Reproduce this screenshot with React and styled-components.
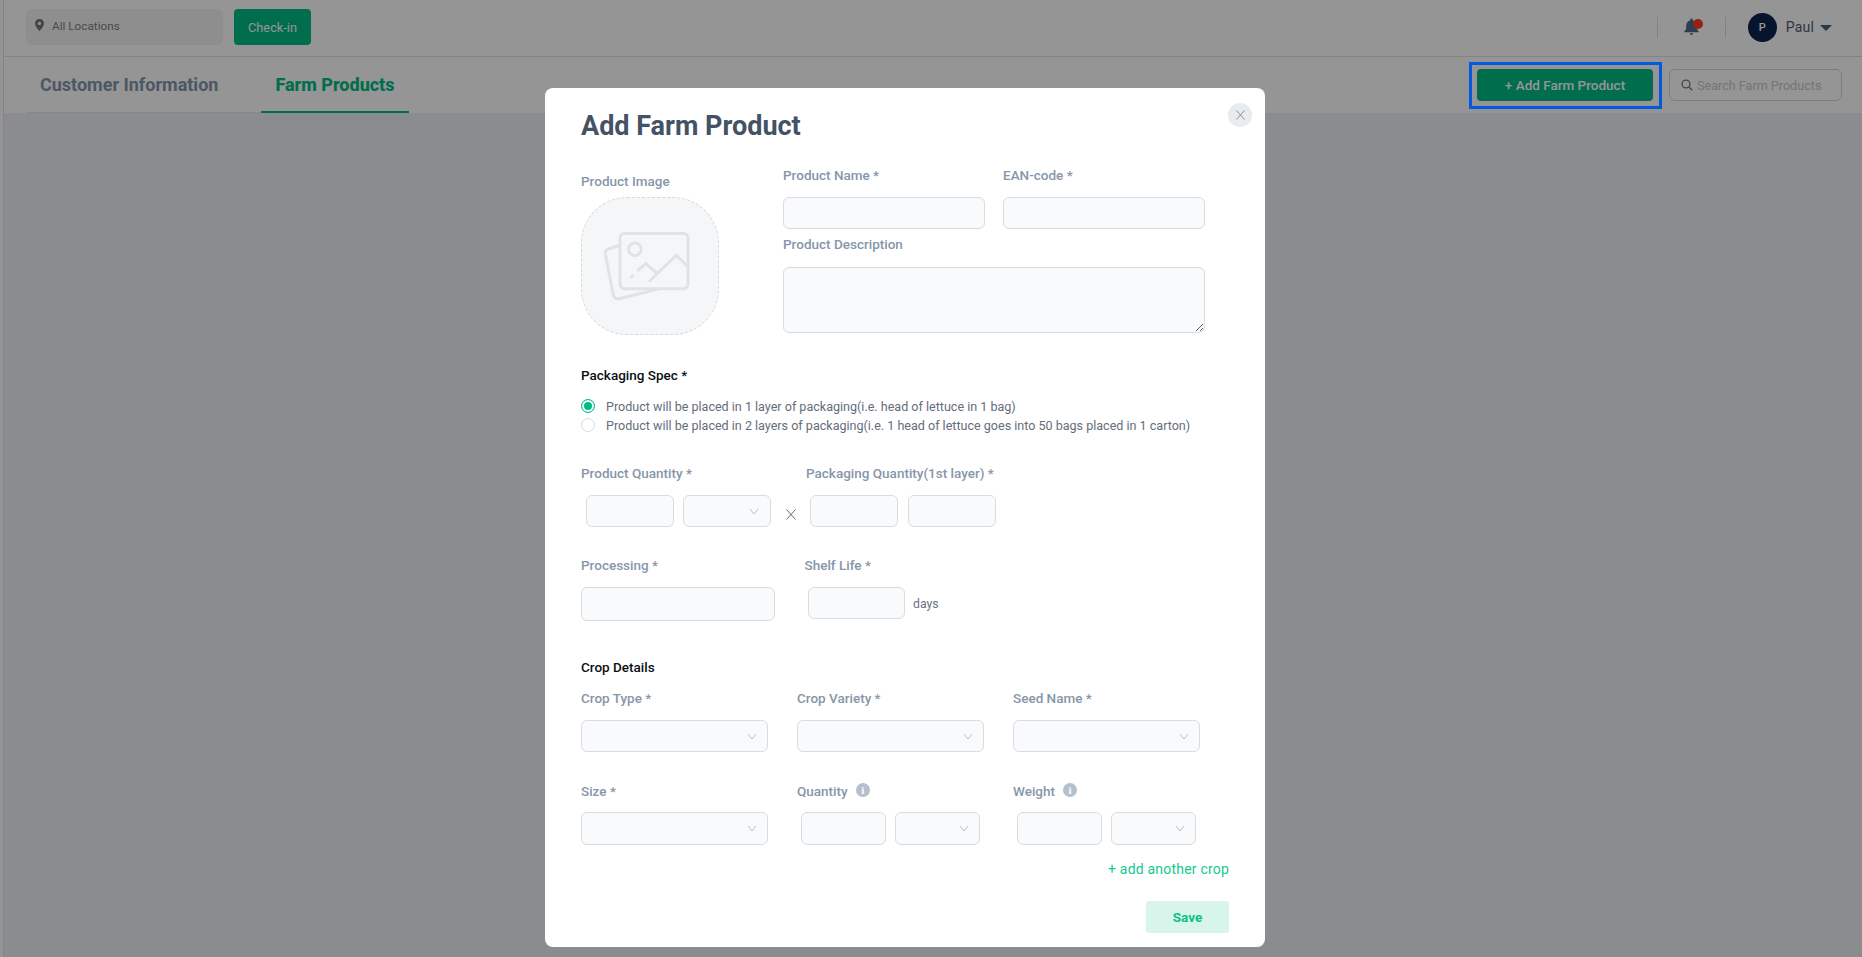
import React from "react";
import styled, { createGlobalStyle } from "styled-components";

const GlobalStyle = createGlobalStyle`
  html, body {
    margin: 0;
    padding: 0;
    height: 100%;
    font-family: Roboto, "Liberation Sans", sans-serif;
    background: #edf0f5;
  }
  * {
    box-sizing: border-box;
  }
`;

const GREEN = "#00bb84";

const Page = styled.div`
  display: flex;
  height: 957px;
  overflow: hidden;
`;

const LeftRail = styled.div`
  width: 4px;
  background: #fff;
  border-right: 1px solid #dfe1e4;
`;

const Main = styled.div`
  flex: 1;
  display: flex;
  flex-direction: column;
`;

const TopBar = styled.div`
  height: 57px;
  flex: none;
  display: flex;
  align-items: flex-start;
  padding: 9px 30px 0 22px;
  background: #fff;
  border-bottom: 1px solid #dfe1e4;
`;

const LocationBox = styled.div`
  width: 197px;
  height: 36px;
  display: flex;
  align-items: flex-start;
  gap: 8px;
  padding: 10px 0 0 9px;
  background: #f4f4f4;
  border-radius: 6px;
  color: #7d7d7d;
  font-size: 11.75px;
  line-height: 14px;
`;

const CheckInButton = styled.button`
  width: 77px;
  height: 36px;
  margin-left: 11px;
  border: 0;
  border-radius: 4px;
  background: ${GREEN};
  color: #fff;
  font: 400 12.75px Roboto, sans-serif;
`;

const BarRight = styled.div`
  margin-left: auto;
  display: flex;
  align-items: center;
  height: 36px;
`;

const BarDivider = styled.div`
  width: 1px;
  height: 21px;
  background: #dcdee1;
`;

const BellSlot = styled.div`
  position: relative;
  width: 67px;
  display: flex;
  justify-content: center;
`;

const BellDot = styled.span`
  position: absolute;
  top: 1px;
  left: 35px;
  width: 10px;
  height: 10px;
  border-radius: 50%;
  background: #ff3b24;
`;

const Avatar = styled.div`
  width: 29px;
  height: 29px;
  margin-left: 22px;
  border-radius: 50%;
  background: #0c2350;
  color: #fff;
  display: flex;
  align-items: center;
  justify-content: center;
  font-size: 11px;
  font-weight: 500;
`;

const UserName = styled.span`
  margin-left: 9px;
  color: #4b5e75;
  font-size: 14px;
  letter-spacing: 0.2px;
`;

const Caret = styled.span`
  width: 0;
  height: 0;
  margin: 2px 0 0 6px;
  border-left: 6px solid transparent;
  border-right: 6px solid transparent;
  border-top: 6px solid #4b5e75;
`;

const TabRow = styled.div`
  height: 56px;
  flex: none;
  display: flex;
  align-items: flex-start;
  padding: 0 20px 0 22px;
  background: #fff;
`;

const TabList = styled.div`
  display: flex;
  gap: 29px;
  height: 56px;
  border-bottom: 1px solid #e4e6e9;
`;

const Tab = styled.div`
  height: 56px;
  padding: 0 14px;
  display: flex;
  align-items: center;
  font-size: 18px;
  font-weight: ${(p) => (p.$active ? 800 : 700)};
  color: ${(p) => (p.$active ? GREEN : "#8396ae")};
  border-bottom: 2px solid ${(p) => (p.$active ? GREEN : "transparent")};
`;

const TabActions = styled.div`
  margin-left: auto;
  display: flex;
  gap: 16px;
  padding-top: 12px;
`;

const AddButton = styled.button`
  width: 176px;
  height: 32px;
  border: 0;
  border-radius: 4px;
  background: ${GREEN};
  color: #fff;
  font: 500 13.5px Roboto, sans-serif;
`;

const SearchBox = styled.div`
  width: 173px;
  height: 32px;
  display: flex;
  align-items: center;
  gap: 4px;
  padding-left: 11px;
  border: 1px solid #d5d5d5;
  border-radius: 6px;
  color: #c6c8ca;
  font-size: 12.6px;
  svg {
    color: #777;
  }
`;

const PageBody = styled.div`
  flex: 1;
  background: #edf0f5;
`;

const Overlay = styled.div`
  position: fixed;
  inset: 0;
  display: flex;
  align-items: flex-start;
  padding: 88px 0 0 545px;
  background: rgba(0, 0, 0, 0.415);
`;

const FocusFrame = styled.div`
  position: absolute;
  top: 62px;
  left: 1469px;
  width: 193px;
  height: 47px;
  border: 3px solid #0558e0;
`;

const Modal = styled.div`
  position: relative;
  width: 720px;
  height: 859px;
  padding: 21px 36px 0 36px;
  background: #fff;
  border-radius: 8px;
`;

const CloseButton = styled.button`
  position: absolute;
  top: 15px;
  right: 13px;
  width: 24px;
  height: 24px;
  padding: 0;
  border: 0;
  border-radius: 50%;
  background: #e8ecef;
  color: #7b8794;
  display: flex;
  align-items: center;
  justify-content: center;
`;

const Title = styled.h1`
  margin: 0 0 22px;
  height: 34px;
  font-size: 27px;
  line-height: 34px;
  font-weight: 700;
  color: #435265;
`;

const TopSection = styled.div`
  display: flex;
  gap: 64px;
`;

const ImageColumn = styled.div`
  width: 138px;
  padding-top: 6px;
`;

const Label = styled.div`
  height: 20px;
  margin: ${(p) => p.$mt || 0}px 0 ${(p) => (p.$mb === undefined ? 12 : p.$mb)}px;
  display: flex;
  align-items: center;
  gap: 8px;
  font-size: 13.5px;
  line-height: 20px;
  font-weight: 500;
  color: #8796a9;
  white-space: nowrap;
`;

const SectionTitle = styled(Label)`
  color: #0b0f14;
`;

const ImageDrop = styled.div`
  width: 138px;
  height: 138px;
  display: flex;
  align-items: center;
  justify-content: center;
  background: #f4f6f7;
  border: 1px dashed #d6dadd;
  border-radius: 46px;
`;

const FieldsColumn = styled.div`
  width: 422px;
`;

const NameGrid = styled.div`
  display: grid;
  grid-template-columns: 202px 202px;
  column-gap: 18px;
`;

const TextField = styled.input`
  display: block;
  width: ${(p) => p.$w || "100%"};
  height: ${(p) => p.$h || 32}px;
  margin: 0;
  padding: 0 8px;
  background: #f9fafb;
  border: 1px solid #d9dce0;
  border-radius: 6px;
  outline: none;
`;

const TextArea = styled.textarea`
  display: block;
  width: 422px;
  height: 66px;
  margin: 0;
  background: #f9fafb;
  border: 1px solid #d9dce0;
  border-radius: 6px;
  outline: none;
`;

const SelectBox = styled.div`
  width: ${(p) => p.$w || "100%"};
  height: ${(p) => p.$h || 32}px;
  display: flex;
  align-items: center;
  justify-content: flex-end;
  padding-right: ${(p) => p.$pr || 10}px;
  background: #f9fafb;
  border: 1px solid #d9dce0;
  border-radius: 6px;
  color: #bcc2c9;
`;

const RadioList = styled.div`
  margin: -0.5px 0 28.5px;
`;

const RadioRow = styled.label`
  display: flex;
  align-items: center;
  height: 19px;
  gap: 11px;
  font-size: 12.55px;
  color: #646e7a;
  white-space: nowrap;
`;

const RadioInput = styled.input`
  appearance: none;
  width: 14px;
  height: 14px;
  margin: 0;
  flex: none;
  border-radius: 50%;
  background: #fff;
  border: 1px solid ${(p) => (p.checked ? GREEN : "#d8dbdf")};
  box-shadow: ${(p) => (p.checked ? `inset 0 0 0 2px #fff, inset 0 0 0 8px ${GREEN}` : "none")};
`;

const TwoLabels = styled.div`
  display: grid;
  grid-template-columns: ${(p) => p.$first}px 1fr;
`;

const QuantityRow = styled.div`
  display: flex;
  align-items: flex-start;
  padding-left: 5px;
  margin-bottom: 28px;
`;

const Pair = styled.div`
  display: flex;
  gap: ${(p) => p.$gap || 9.5}px;
`;

const Times = styled.div`
  width: 39px;
  height: 32px;
  padding-top: 8px;
  text-align: center;
  font-size: 16px;
  line-height: 24px;
  color: #5f6873;
`;

const ShelfRow = styled.div`
  display: flex;
  align-items: center;
  height: 34px;
  margin-bottom: 36px;
`;

const ShelfField = styled(TextField)`
  margin: 0 8px 2px 33px;
`;

const DaysText = styled.span`
  font-size: 12.25px;
  color: #6b7280;
`;

const CropGrid = styled.div`
  display: grid;
  grid-template-columns: repeat(3, 186.5px);
  column-gap: 29.5px;
`;

const CropCell = styled.div`
  margin-bottom: ${(p) => p.$mb || 0}px;
`;

const CropPair = styled(Pair)`
  padding-left: 4px;
`;

const InfoDot = styled.span`
  width: 14px;
  height: 14px;
  margin-top: -3px;
  border-radius: 50%;
  background: #b4c0ce;
  color: #fff;
  display: flex;
  align-items: center;
  justify-content: center;
  font: 700 11px "Liberation Serif", serif;
`;

const AddCrop = styled.div`
  margin-top: 14px;
  height: 20px;
  text-align: right;
  font-size: 14px;
  line-height: 20px;
  letter-spacing: 0.2px;
  color: #14c98e;
`;

const SaveRow = styled.div`
  display: flex;
  justify-content: flex-end;
  margin-top: 22px;
`;

const SaveButton = styled.button`
  width: 83px;
  height: 32px;
  border: 0;
  border-radius: 3px;
  background: #d8f5eb;
  color: #0fc088;
  font: 700 13.5px Roboto, sans-serif;
`;

const Chevron = () => (
  <svg width="10" height="7" viewBox="0 0 10 7" fill="none" stroke="currentColor" strokeWidth="1">
    <polyline points="1,1 5,6 9,1" />
  </svg>
);

const PinIcon = () => (
  <svg width="9" height="12" viewBox="0 0 9 12" fill="#777">
    <path
      fillRule="evenodd"
      d="M4.5 0C2 0 0 2 0 4.4 0 7.4 4.5 12 4.5 12S9 7.4 9 4.4C9 2 7 0 4.5 0Zm0 6.1a1.7 1.7 0 1 1 0-3.4 1.7 1.7 0 0 1 0 3.4Z"
    />
  </svg>
);

const BellIcon = () => (
  <svg width="15" height="18" viewBox="0 0 15 18" fill="#4d6a8c">
    <path d="M7.5 0.5c-.7 0-1.2.5-1.2 1.2v.6C3.8 2.9 2.2 5 2.2 7.600v3.300L.4 13.200v1.100h14.200v-1.100l-1.800-2.300V7.600c0-2.600-1.600-4.700-4.100-5.300v-.6c0-.7-.5-1.200-1.200-1.200Z" />
    <path d="M5.700 15.300a1.800 1.800 0 0 0 3.600 0Z" />
  </svg>
);

const SearchIcon = () => (
  <svg width="12" height="12" viewBox="0 0 12 12" fill="none" stroke="currentColor" strokeWidth="1.3">
    <circle cx="5" cy="5" r="3.900" />
    <line x1="8" y1="8" x2="11.300" y2="11.300" />
  </svg>
);

const CloseIcon = () => (
  <svg width="9" height="10" viewBox="0 0 9 10" fill="none" stroke="currentColor" strokeWidth="0.9">
    <line x1="0.500" y1="0.500" x2="8.500" y2="9.500" />
    <line x1="8.500" y1="0.500" x2="0.500" y2="9.500" />
  </svg>
);

const TimesIcon = () => (
  <svg width="10" height="11" viewBox="0 0 10 11" fill="none" stroke="currentColor" strokeWidth="1">
    <line x1="0.500" y1="0.500" x2="9.500" y2="10.500" />
    <line x1="9.500" y1="0.500" x2="0.500" y2="10.500" />
  </svg>
);

const PhotoIcon = () => (
  <svg
    width="93"
    height="72"
    viewBox="102 120 280 215"
    fill="none"
    stroke="#dfe3e6"
    strokeWidth="9"
    strokeLinecap="round"
    strokeLinejoin="round"
  >
    <rect x="150" y="130" width="205" height="166" rx="14" />
    <circle cx="195" cy="177" r="19" />
    <path d="M148 166 L116 176 Q104 180 106 192 L130 314 Q133 328 147 326 L262 298" />
    <path d="M185 260 L188 257 M205 240 L228 220 L262 250 M240 272 L320 195 L353 228" />
  </svg>
);

const Select = (props) => (
  <SelectBox {...props}>
    <Chevron />
  </SelectBox>
);

const App = () => {
  return (
    <>
      <GlobalStyle />
      <Page>
        <LeftRail />
        <Main>
          <TopBar>
            <LocationBox>
              <PinIcon />
              All Locations
            </LocationBox>
            <CheckInButton>Check-in</CheckInButton>
            <BarRight>
              <BarDivider />
              <BellSlot>
                <BellIcon />
                <BellDot />
              </BellSlot>
              <BarDivider />
              <Avatar>P</Avatar>
              <UserName>Paul</UserName>
              <Caret />
            </BarRight>
          </TopBar>
          <TabRow>
            <TabList>
              <Tab>Customer Information</Tab>
              <Tab $active>Farm Products</Tab>
            </TabList>
            <TabActions>
              <AddButton>+ Add Farm Product</AddButton>
              <SearchBox>
                <SearchIcon />
                Search Farm Products
              </SearchBox>
            </TabActions>
          </TabRow>
          <PageBody />
        </Main>
      </Page>

      <Overlay>
        <FocusFrame />
        <Modal>
          <CloseButton>
            <CloseIcon />
          </CloseButton>
          <Title>Add Farm Product</Title>

          <TopSection>
            <ImageColumn>
              <Label $mb={6}>Product Image</Label>
              <ImageDrop>
                <PhotoIcon />
              </ImageDrop>
            </ImageColumn>
            <FieldsColumn>
              <NameGrid>
                <div>
                  <Label>Product Name *</Label>
                  <TextField />
                </div>
                <div>
                  <Label>EAN-code *</Label>
                  <TextField />
                </div>
              </NameGrid>
              <Label $mt={5} $mb={13}>
                Product Description
              </Label>
              <TextArea />
            </FieldsColumn>
          </TopSection>

          <SectionTitle $mt={30}>Packaging Spec *</SectionTitle>
          <RadioList>
            <RadioRow>
              <RadioInput type="radio" name="layers" checked readOnly />
              Product will be placed in 1 layer of packaging(i.e. head of lettuce in 1 bag)
            </RadioRow>
            <RadioRow>
              <RadioInput type="radio" name="layers" checked={false} readOnly />
              Product will be placed in 2 layers of packaging(i.e. 1 head of lettuce goes into 50 bags placed in 1 carton)
            </RadioRow>
          </RadioList>

          <TwoLabels $first={225}>
            <Label>Product Quantity *</Label>
            <Label>Packaging Quantity(1st layer) *</Label>
          </TwoLabels>
          <QuantityRow>
            <Pair $gap={9}>
              <TextField $w="88px" />
              <Select $w="88px" $pr={11} />
            </Pair>
            <Times>
              <TimesIcon />
            </Times>
            <Pair $gap={10}>
              <TextField $w="88px" />
              <TextField $w="88px" />
            </Pair>
          </QuantityRow>

          <TwoLabels $first={223.5}>
            <Label>Processing *</Label>
            <Label>Shelf Life *</Label>
          </TwoLabels>
          <ShelfRow>
            <TextField $w="194px" $h={34} />
            <ShelfField $w="97px" />
            <DaysText>days</DaysText>
          </ShelfRow>

          <SectionTitle $mb={11}>Crop Details</SectionTitle>
          <CropGrid>
            <CropCell $mb={29}>
              <Label>Crop Type *</Label>
              <Select />
            </CropCell>
            <CropCell $mb={29}>
              <Label>Crop Variety *</Label>
              <Select />
            </CropCell>
            <CropCell $mb={29}>
              <Label>Seed Name *</Label>
              <Select />
            </CropCell>
            <CropCell>
              <Label $mb={11}>Size *</Label>
              <Select $h={33} />
            </CropCell>
            <CropCell>
              <Label $mb={11}>
                Quantity <InfoDot>i</InfoDot>
              </Label>
              <CropPair>
                <TextField $w="84.5px" $h={33} />
                <Select $w="84.5px" $h={33} />
              </CropPair>
            </CropCell>
            <CropCell>
              <Label $mb={11}>
                Weight <InfoDot>i</InfoDot>
              </Label>
              <CropPair>
                <TextField $w="84.5px" $h={33} />
                <Select $w="84.5px" $h={33} />
              </CropPair>
            </CropCell>
          </CropGrid>

          <AddCrop>+ add another crop</AddCrop>
          <SaveRow>
            <SaveButton>Save</SaveButton>
          </SaveRow>
        </Modal>
      </Overlay>
    </>
  );
};

export default App;
